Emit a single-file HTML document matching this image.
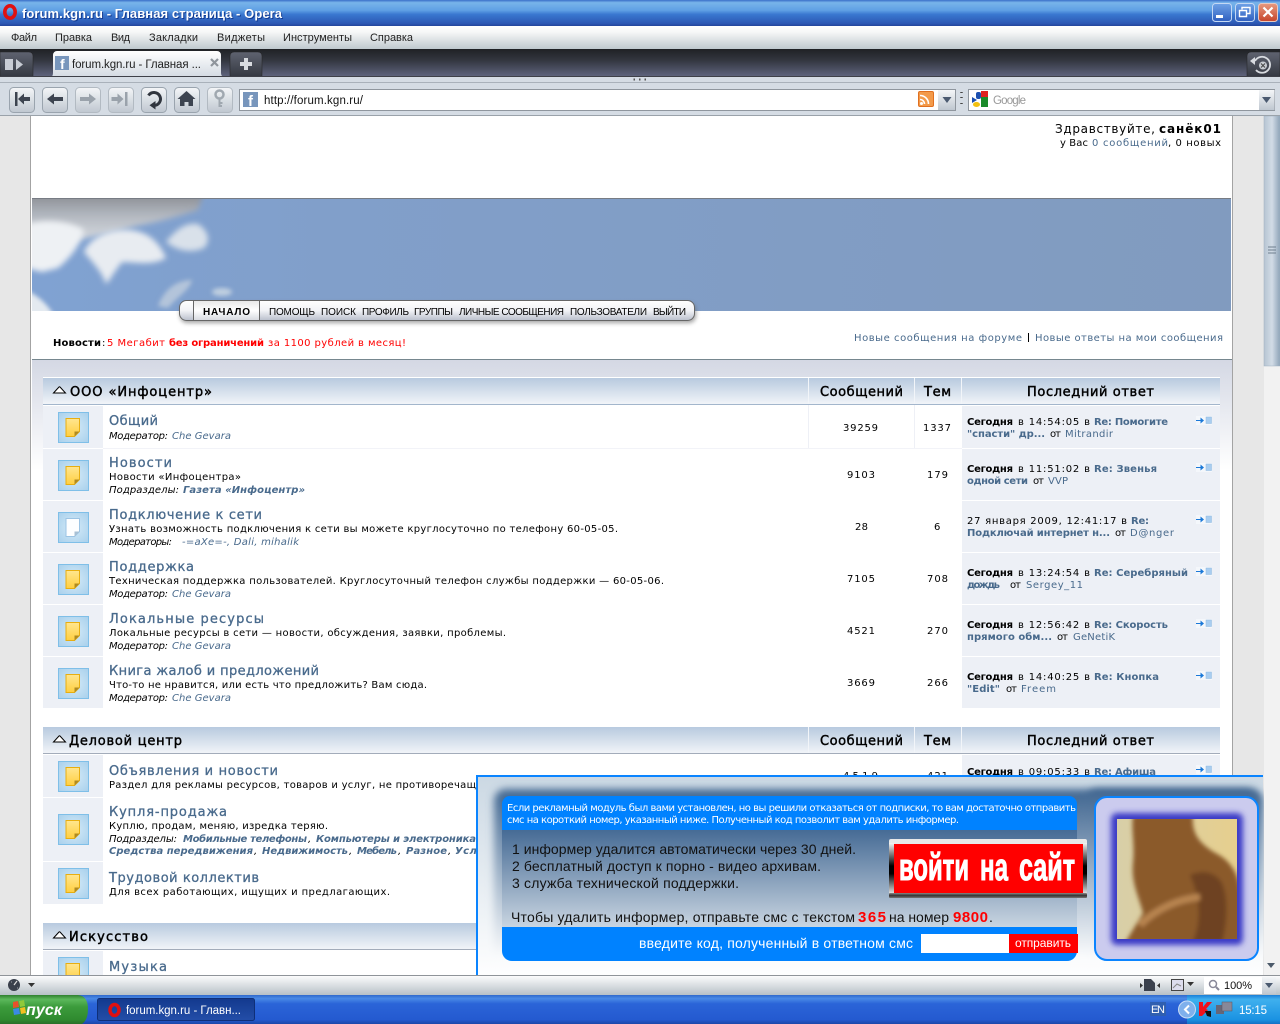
<!DOCTYPE html>
<html lang="ru"><head><meta charset="utf-8"><title>forum.kgn.ru - Главная страница - Opera</title>
<style>
html,body{margin:0;padding:0;width:1280px;height:1024px;overflow:hidden;background:#fff}
svg{display:block;position:absolute;left:0;top:0}
text{font:10px "DejaVu Sans","Noto Sans CJK SC",sans-serif;fill:#000;white-space:pre}
.l{fill:#496a8c}.b{font-weight:bold}.i{font-style:italic}
.ti{font-size:13px;fill:#496a8c;stroke:#496a8c;stroke-width:.3}
.h{font-size:13px;stroke:#000;stroke-width:.45}
.n{font-family:"Liberation Sans",sans-serif;font-size:10px}
.m{font-family:"Liberation Sans",sans-serif;font-size:11px;fill:#222}
.a{font-family:"Liberation Sans",sans-serif;font-size:14px;fill:#111}
.w{fill:#fff}.r{fill:#f00}
</style></head><body>
<svg width="1280" height="1024" viewBox="0 0 1280 1024" xmlns="http://www.w3.org/2000/svg">
<defs>
<linearGradient id="gT" x1="0" y1="0" x2="0" y2="1"><stop offset="0" stop-color="#3a6fc8"/><stop offset=".1" stop-color="#78b4ea"/><stop offset=".4" stop-color="#5f9fe4"/><stop offset=".55" stop-color="#3a78d0"/><stop offset=".9" stop-color="#2c58b4"/><stop offset="1" stop-color="#23459c"/></linearGradient>
<linearGradient id="gM" x1="0" y1="0" x2="0" y2="1"><stop offset="0" stop-color="#fff"/><stop offset=".25" stop-color="#f6f7f7"/><stop offset="1" stop-color="#bcc6cc"/></linearGradient>
<linearGradient id="gD" x1="0" y1="0" x2="0" y2="1"><stop offset="0" stop-color="#1f2125"/><stop offset=".4" stop-color="#33363f"/><stop offset="1" stop-color="#60657f"/></linearGradient>
<linearGradient id="gTb" x1="0" y1="0" x2="0" y2="1"><stop offset="0" stop-color="#5f6370"/><stop offset="1" stop-color="#343841"/></linearGradient>
<linearGradient id="gB" x1="0" y1="0" x2="0" y2="1"><stop offset="0" stop-color="#f4f6f8"/><stop offset="1" stop-color="#bfc7d0"/></linearGradient>
<linearGradient id="gTab" x1="0" y1="0" x2="0" y2="1"><stop offset="0" stop-color="#fff"/><stop offset="1" stop-color="#d3dae2"/></linearGradient>
<linearGradient id="gH" x1="0" y1="0" x2="0" y2="1"><stop offset="0" stop-color="#b8cadf"/><stop offset="1" stop-color="#f1f4f8"/></linearGradient>
<linearGradient id="gF" x1="0" y1="0" x2="0" y2="1"><stop offset="0" stop-color="#d4d8e4"/><stop offset="1" stop-color="#fff"/></linearGradient>
<linearGradient id="gN" x1="0" y1="0" x2="0" y2="1"><stop offset="0" stop-color="#fff"/><stop offset=".5" stop-color="#f2f3f6"/><stop offset="1" stop-color="#b9bfcc"/></linearGradient>
<linearGradient id="gN2" x1="0" y1="0" x2="0" y2="1"><stop offset="0" stop-color="#e8e8e8"/><stop offset=".5" stop-color="#fff"/><stop offset="1" stop-color="#d8dae0"/></linearGradient>
<linearGradient id="gAd" x1="0" y1="0" x2="0" y2="1"><stop offset="0" stop-color="#cbd8e3"/><stop offset="1" stop-color="#fff"/></linearGradient>
<linearGradient id="gAm" x1="0" y1="0" x2="0" y2="1"><stop offset="0" stop-color="#466b95"/><stop offset="1" stop-color="#c9d5e1"/></linearGradient>
<linearGradient id="gSh" x1="0" y1="0" x2="0" y2="1"><stop offset="0" stop-color="#3f6590"/><stop offset=".5" stop-color="#9fb3c8"/><stop offset="1" stop-color="#fff"/></linearGradient>
<linearGradient id="gSt" x1="0" y1="0" x2="0" y2="1"><stop offset="0" stop-color="#fff"/><stop offset="1" stop-color="#b7c0c7"/></linearGradient>
<linearGradient id="gTk" x1="0" y1="0" x2="0" y2="1"><stop offset="0" stop-color="#2f68cc"/><stop offset=".12" stop-color="#4a8ae6"/><stop offset=".3" stop-color="#2b64d8"/><stop offset=".85" stop-color="#245ad0"/><stop offset="1" stop-color="#1b47a8"/></linearGradient>
<linearGradient id="gTr" x1="0" y1="0" x2="0" y2="1"><stop offset="0" stop-color="#1a7fd8"/><stop offset=".15" stop-color="#3fb0ee"/><stop offset=".85" stop-color="#1a92e2"/><stop offset="1" stop-color="#1470c4"/></linearGradient>
<linearGradient id="gSr" x1="0" y1="0" x2="0" y2="1"><stop offset="0" stop-color="#2f7f2f"/><stop offset=".15" stop-color="#5cb85c"/><stop offset=".4" stop-color="#3c9c3c"/><stop offset=".85" stop-color="#2f8a2f"/><stop offset="1" stop-color="#2a6f2a"/></linearGradient>
<linearGradient id="gTs" x1="0" y1="0" x2="0" y2="1"><stop offset="0" stop-color="#13398e"/><stop offset="1" stop-color="#234ea8"/></linearGradient>
<linearGradient id="gSb" x1="0" y1="0" x2="1" y2="0"><stop offset="0" stop-color="#b6c4d2"/><stop offset=".5" stop-color="#d2dce6"/><stop offset="1" stop-color="#8ea3b8"/></linearGradient>
<linearGradient id="gWb" x1="0" y1="0" x2="0" y2="1"><stop offset="0" stop-color="#6fa2e6"/><stop offset="1" stop-color="#2f5fc0"/></linearGradient>
<linearGradient id="gCl" x1="0" y1="0" x2="0" y2="1"><stop offset="0" stop-color="#e89a80"/><stop offset="1" stop-color="#c6452a"/></linearGradient>
<linearGradient id="gDoc" x1="0" y1="0" x2="0" y2="1"><stop offset="0" stop-color="#ffe690"/><stop offset="1" stop-color="#ffcf40"/></linearGradient>
<linearGradient id="gSide" x1="0" y1="0" x2="0" y2="1"><stop offset="0" stop-color="#f4f4f4"/><stop offset=".45" stop-color="#000"/><stop offset=".6" stop-color="#000"/><stop offset="1" stop-color="#e8e8e8"/></linearGradient>
<linearGradient id="gBot" x1="0" y1="0" x2="0" y2="1"><stop offset="0" stop-color="#8a8a8a"/><stop offset=".5" stop-color="#333"/><stop offset="1" stop-color="#777"/></linearGradient>
<linearGradient id="gImg" x1="0" y1="0" x2="1" y2="0"><stop offset="0" stop-color="#d8cfa8"/><stop offset="1" stop-color="#e6cf8e"/></linearGradient>
<linearGradient id="gSky" x1="0" y1="0" x2="1" y2="0"><stop offset="0" stop-color="#80a2d2"/><stop offset=".25" stop-color="#819fca"/><stop offset="1" stop-color="#819bbf"/></linearGradient>
<linearGradient id="gCt" x1="0" y1="0" x2="0" y2="1"><stop offset="0" stop-color="#85888f"/><stop offset=".45" stop-color="#b4b9c1"/><stop offset="1" stop-color="#dde1e6"/></linearGradient>
<radialGradient id="gIc" cx=".5" cy=".5" r=".7"><stop offset="0" stop-color="#d6ebf8"/><stop offset="1" stop-color="#a8d0ec"/></radialGradient>
<filter id="bl1" x="-30%" y="-30%" width="160%" height="160%"><feGaussianBlur stdDeviation="1.5"/></filter>
<filter id="bl2" x="-30%" y="-30%" width="160%" height="160%"><feGaussianBlur stdDeviation="2"/></filter>
<filter id="bl3" x="-30%" y="-30%" width="160%" height="160%"><feGaussianBlur stdDeviation="3"/></filter>
<filter id="bl4" x="-30%" y="-30%" width="160%" height="160%"><feGaussianBlur stdDeviation="4"/></filter>
<clipPath id="cB"><rect x="32" y="198" width="1199" height="113"/></clipPath>
<clipPath id="cI"><rect x="1117" y="819" width="120" height="120"/></clipPath>
<g id="fi"><rect x="0.5" y="0.5" width="30" height="30" fill="url(#gIc)" stroke="#7fbfe8"/><path d="M8 6.5h13.5v13l-5 5H8z" fill="url(#gDoc)" stroke="#e8ae10"/><path d="M16.5 24.5v-5h5z" fill="#b08a20"/></g>
<g id="fw"><rect x="0.5" y="0.5" width="30" height="30" fill="url(#gIc)" stroke="#7fbfe8"/><path d="M8 6.5h13.5v13l-5 5H8z" fill="#fdfeff" stroke="#9cc4e4"/><path d="M16.5 24.5v-5h5z" fill="#a8c0d4"/></g>
<g id="ar"><rect x="0" y="0" width="16" height="9" fill="#f4f7fb"/><path d="M0 4h4.5v-2.5l3.500 3-3.500 3v-2.500H0z" fill="#1a78d8"/><rect x="10" y="1" width="5.500" height="6.500" fill="#a8cdf0" stroke="#8fb8de" stroke-width=".5"/></g>
<g id="tri"><path d="M.5 7 L6 1 Q6.500 .5 7 1 L12.500 7z" fill="#fff" stroke="#000"/></g>
</defs>

<!-- page -->
<rect width="1280" height="1024" fill="#e7e7e7"/>
<rect x="30" y="115" width="1203" height="865" fill="#a3a3a3"/>
<rect x="31" y="115" width="1201" height="865" fill="#fff"/>
<g id="banner" clip-path="url(#cB)">
<rect x="32" y="198" width="1199" height="113" fill="url(#gSky)"/>
<path d="M26 192H204L198 210C178 216 160 222 136 226 116 232 96 236 76 240L26 246z" fill="url(#gCt)" filter="url(#bl3)"/>
<path d="M26 224C48 218 72 222 84 230 80 246 70 258 58 268L42 272 26 268z" fill="#eef1f4" filter="url(#bl3)"/>
<path d="M84 252C90 238 108 228 130 230 150 232 160 244 166 258 152 266 136 262 122 262 114 272 110 280 106 284 102 272 94 264 84 252z" fill="#e8ecf1" filter="url(#bl3)"/>
<path d="M166 242C174 232 184 222 198 224 210 232 210 242 204 248 190 254 176 250 166 242z" fill="#d9e1ea" filter="url(#bl3)"/>
<path d="M158 306C164 290 176 280 192 280 190 290 178 296 168 308z" fill="#b3c4da" filter="url(#bl2)"/>
<ellipse cx="222" cy="292" rx="10" ry="4" fill="#bfcfe0" filter="url(#bl2)"/>
<path d="M26 290C38 296 48 304 54 316H26z" fill="#e4eaf0" filter="url(#bl2)"/>
<rect x="32" y="198" width="1199" height="1" fill="#777c84"/>
</g>
<text x="1055" y="133" style="font-size:12px" textLength="100">Здравствуйте,</text>
<text x="1159" y="133" class="b" style="font-size:12px" textLength="62">санёк01</text>
<text x="1060" y="146" textLength="28">у Вас</text>
<text x="1092" y="146" class="l" textLength="76">0 сообщений</text>
<text x="1168" y="146" textLength="53">, 0 новых</text>

<g id="nav">
<rect x="180" y="303" width="516" height="20" rx="7" fill="#666" filter="url(#bl2)" opacity=".6"/>
<rect x="179.500" y="300.500" width="515" height="20" rx="7" fill="url(#gN)" stroke="#666"/>
<rect x="193" y="301" width="67" height="19" fill="url(#gN2)"/>
<path d="M193.500 300.500v20M259.500 300.500v20" stroke="#666" fill="none"/>
<text x="203" y="315" class="n b" textLength="47">НАЧАЛО</text>
<text x="269" y="315" class="n" textLength="46">ПОМОЩЬ</text>
<text x="321" y="315" class="n" textLength="35">ПОИСК</text>
<text x="362" y="315" class="n" textLength="47">ПРОФИЛЬ</text>
<text x="414" y="315" class="n" textLength="39">ГРУППЫ</text>
<text x="459" y="315" class="n" textLength="105">ЛИЧНЫЕ СООБЩЕНИЯ</text>
<text x="570" y="315" class="n" textLength="77">ПОЛЬЗОВАТЕЛИ</text>
<text x="653" y="315" class="n" textLength="33">ВЫЙТИ</text>
</g>

<text x="53" y="346" class="b" textLength="48">Новости</text><text x="102" y="346">:</text>
<text x="107" y="346" class="r" textLength="58">5 Мегабит</text>
<text x="169" y="346" class="r b" textLength="95">без ограничений</text>
<text x="268" y="346" class="r" textLength="138">за 1100 рублей в месяц!</text>
<text x="854" y="341" class="l" textLength="168">Новые сообщения на форуме</text>
<rect x="1028" y="333" width="1" height="9" fill="#000"/>
<text x="1035" y="341" class="l" textLength="188">Новые ответы на мои сообщения</text>

<rect x="32" y="359" width="1200" height="1" fill="#76878f"/>
<rect x="32" y="360" width="1200" height="110" fill="url(#gF)"/>

<!-- category 1 -->
<g id="cat1">
<rect x="43" y="377" width="1177" height="332" fill="#fff"/>
<rect x="43" y="378" width="1177" height="26" fill="url(#gH)"/>
<rect x="43" y="404" width="1177" height="1" fill="#a3b6cc"/>
<path d="M808.500 378v26M914.500 378v26M961.500 378v26" stroke="#f2f5f9"/>
<use href="#tri" x="53" y="386"/>
<text x="70" y="396" class="h" textLength="142">ООО «Инфоцентр»</text>
<text x="820" y="396" class="h" textLength="83">Сообщений</text>
<text x="924" y="396" class="h" textLength="27">Тем</text>
<text x="1027" y="396" class="h" textLength="127">Последний ответ</text>
<path d="M808.500 405v43M914.500 405v43" stroke="#eef0f6"/>
<path d="M103 448.500H962" stroke="#f2f3f8"/>
<rect x="43" y="406" width="60" height="42" fill="#edf0f6"/><rect x="962" y="406" width="258" height="42" fill="#edf0f6"/>
<rect x="43" y="449" width="60" height="51" fill="#edf0f6"/><rect x="962" y="449" width="258" height="51" fill="#edf0f6"/>
<rect x="43" y="501" width="60" height="51" fill="#edf0f6"/><rect x="962" y="501" width="258" height="51" fill="#edf0f6"/>
<rect x="43" y="553" width="60" height="51" fill="#edf0f6"/><rect x="962" y="553" width="258" height="51" fill="#edf0f6"/>
<rect x="43" y="605" width="60" height="51" fill="#edf0f6"/><rect x="962" y="605" width="258" height="51" fill="#edf0f6"/>
<rect x="43" y="657" width="60" height="51" fill="#edf0f6"/><rect x="962" y="657" width="258" height="51" fill="#edf0f6"/>
<use href="#fi" x="58" y="412"/><use href="#fi" x="58" y="460"/><use href="#fw" x="58" y="512"/><use href="#fi" x="58" y="564"/><use href="#fi" x="58" y="616"/><use href="#fi" x="58" y="668"/>
<use href="#ar" x="1196" y="416"/><use href="#ar" x="1196" y="463"/><use href="#ar" x="1196" y="515"/><use href="#ar" x="1196" y="567"/><use href="#ar" x="1196" y="619"/><use href="#ar" x="1196" y="671"/>

<text x="109" y="425" class="ti" textLength="49">Общий</text>
<text x="109" y="439" class="i" textLength="59">Модератор:</text><text x="172" y="439" class="i l" textLength="59">Che Gevara</text>
<text x="843" y="431" textLength="35">39259</text><text x="923" y="431" textLength="28">1337</text>
<text x="967" y="425" class="b" textLength="46">Сегодня</text><text x="1018" y="425" textLength="72">в 14:54:05 в</text><text x="1094" y="425" class="b l" textLength="74">Re: Помогите</text>
<text x="967" y="437" class="b l" textLength="78">"спасти" др...</text><text x="1050" y="437" textLength="11">от</text><text x="1065" y="437" class="l" textLength="48">Mitrandir</text>

<text x="109" y="467" class="ti" textLength="63">Новости</text>
<text x="109" y="480" textLength="132">Новости «Инфоцентра»</text>
<text x="109" y="493" class="i" textLength="70">Подразделы:</text><text x="183" y="493" class="i b l" textLength="122">Газета «Инфоцентр»</text>
<text x="847" y="478" textLength="28">9103</text><text x="927" y="478" textLength="21">179</text>
<text x="967" y="472" class="b" textLength="46">Сегодня</text><text x="1018" y="472" textLength="72">в 11:51:02 в</text><text x="1094" y="472" class="b l" textLength="63">Re: Звенья</text>
<text x="967" y="484" class="b l" textLength="61">одной сети</text><text x="1033" y="484" textLength="11">от</text><text x="1048" y="484" class="l" textLength="20">VVP</text>

<text x="109" y="519" class="ti" textLength="153">Подключение к сети</text>
<text x="109" y="532" textLength="509">Узнать возможность подключения к сети вы можете круглосуточно по телефону 60-05-05.</text>
<text x="109" y="545" class="i" textLength="63">Модераторы:</text><text x="182" y="545" class="i l" textLength="117">-=aXe=-, Dali, mihalik</text>
<text x="855" y="530" textLength="13">28</text><text x="934" y="530" textLength="7">6</text>
<text x="967" y="524" textLength="160">27 января 2009, 12:41:17 в</text><text x="1131" y="524" class="b l" textLength="18">Re:</text>
<text x="967" y="536" class="b l" textLength="143">Подключай интернет н...</text><text x="1115" y="536" textLength="11">от</text><text x="1130" y="536" class="l" textLength="44">D@nger</text>

<text x="109" y="571" class="ti" textLength="85">Поддержка</text>
<text x="109" y="584" textLength="555">Техническая поддержка пользователей. Круглосуточный телефон службы поддержки — 60-05-06.</text>
<text x="109" y="597" class="i" textLength="59">Модератор:</text><text x="172" y="597" class="i l" textLength="59">Che Gevara</text>
<text x="847" y="582" textLength="28">7105</text><text x="927" y="582" textLength="21">708</text>
<text x="967" y="576" class="b" textLength="46">Сегодня</text><text x="1018" y="576" textLength="72">в 13:24:54 в</text><text x="1094" y="576" class="b l" textLength="94">Re: Серебряный</text>
<text x="967" y="588" class="b l" textLength="33">дождь</text><text x="1010" y="588" textLength="11">от</text><text x="1026" y="588" class="l" textLength="57">Sergey_11</text>

<text x="109" y="623" class="ti" textLength="155">Локальные ресурсы</text>
<text x="109" y="636" textLength="397">Локальные ресурсы в сети — новости, обсуждения, заявки, проблемы.</text>
<text x="109" y="649" class="i" textLength="59">Модератор:</text><text x="172" y="649" class="i l" textLength="59">Che Gevara</text>
<text x="847" y="634" textLength="28">4521</text><text x="927" y="634" textLength="21">270</text>
<text x="967" y="628" class="b" textLength="46">Сегодня</text><text x="1018" y="628" textLength="72">в 12:56:42 в</text><text x="1094" y="628" class="b l" textLength="74">Re: Скорость</text>
<text x="967" y="640" class="b l" textLength="85">прямого обм...</text><text x="1057" y="640" textLength="11">от</text><text x="1073" y="640" class="l" textLength="42">GeNetiK</text>

<text x="109" y="675" class="ti" textLength="210">Книга жалоб и предложений</text>
<text x="109" y="688" textLength="318">Что-то не нравится, или есть что предложить? Вам сюда.</text>
<text x="109" y="701" class="i" textLength="59">Модератор:</text><text x="172" y="701" class="i l" textLength="59">Che Gevara</text>
<text x="847" y="686" textLength="28">3669</text><text x="927" y="686" textLength="21">266</text>
<text x="967" y="680" class="b" textLength="46">Сегодня</text><text x="1018" y="680" textLength="72">в 14:40:25 в</text><text x="1094" y="680" class="b l" textLength="65">Re: Кнопка</text>
<text x="967" y="692" class="b l" textLength="33">"Edit"</text><text x="1006" y="692" textLength="11">от</text><text x="1021" y="692" class="l" textLength="35">Freem</text>
</g>

<!-- category 2 -->
<g id="cat2">
<rect x="43" y="727" width="1177" height="26" fill="url(#gH)"/>
<rect x="43" y="753" width="1177" height="1" fill="#a3acba"/>
<path d="M808.500 727v26M914.500 727v26M961.500 727v26" stroke="#f2f5f9"/>
<use href="#tri" x="53" y="735"/>
<text x="69" y="745" class="h" textLength="113">Деловой центр</text>
<text x="820" y="745" class="h" textLength="83">Сообщений</text>
<text x="924" y="745" class="h" textLength="27">Тем</text>
<text x="1027" y="745" class="h" textLength="127">Последний ответ</text>
<rect x="43" y="755" width="60" height="42" fill="#edf0f6"/>
<rect x="962" y="755" width="258" height="42" fill="#edf0f6"/>
<rect x="43" y="798" width="60" height="63" fill="#edf0f6"/>
<rect x="43" y="862" width="60" height="42" fill="#edf0f6"/>
<use href="#fi" x="58" y="761"/><use href="#fi" x="58" y="814"/><use href="#fi" x="58" y="868"/>
<use href="#ar" x="1196" y="765"/>
<text x="109" y="775" class="ti" textLength="169">Объявления и новости</text>
<text x="109" y="788" textLength="367">Раздел для рекламы ресурсов, товаров и услуг, не противоречащ</text>
<text x="843" y="779" textLength="35">4519</text><text x="927" y="779" textLength="21">421</text>
<text x="967" y="775" class="b" textLength="46">Сегодня</text><text x="1018" y="775" textLength="72">в 09:05:33 в</text><text x="1094" y="775" class="b l" textLength="62">Re: Афиша</text>
<text x="109" y="816" class="ti" textLength="118">Купля-продажа</text>
<text x="109" y="829" textLength="219">Куплю, продам, меняю, изредка теряю.</text>
<text x="109" y="842" class="i" textLength="68">Подразделы:</text>
<text x="183" y="842" class="i b l" textLength="124">Мобильные телефоны</text><text x="308" y="842" class="i">,</text>
<text x="316" y="842" class="i b l" textLength="160">Компьютеры и электроника</text>
<text x="109" y="854" class="i b l" textLength="144">Средства передвижения</text><text x="254" y="854" class="i">,</text>
<text x="262" y="854" class="i b l" textLength="86">Недвижимость</text><text x="349" y="854" class="i">,</text>
<text x="357" y="854" class="i b l" textLength="40">Мебель</text><text x="398" y="854" class="i">,</text>
<text x="406" y="854" class="i b l" textLength="41">Разное</text><text x="448" y="854" class="i">,</text>
<text x="455" y="854" class="i b l" textLength="42">Услуги</text>
<text x="109" y="882" class="ti" textLength="150">Трудовой коллектив</text>
<text x="109" y="895" textLength="281">Для всех работающих, ищущих и предлагающих.</text>
</g>

<!-- category 3 -->
<g id="cat3">
<rect x="43" y="923" width="1177" height="26" fill="url(#gH)"/>
<rect x="43" y="949" width="1177" height="1" fill="#a3acba"/>
<use href="#tri" x="53" y="931"/>
<text x="69" y="941" class="h" textLength="79">Искусство</text>
<rect x="43" y="951" width="60" height="30" fill="#edf0f6"/>
<use href="#fi" x="58" y="957"/>
<text x="109" y="971" class="ti" textLength="58">Музыка</text>
</g>

<!-- ad informer -->
<g id="informer">
<rect x="476" y="775" width="787" height="205" fill="url(#gAd)"/>
<rect x="476" y="775" width="787" height="2" fill="#0a84ff"/>
<rect x="476" y="775" width="2" height="205" fill="#0a84ff"/>
<rect x="494" y="789" width="764" height="172" rx="12" fill="url(#gSh)" filter="url(#bl4)"/>
<rect x="1086" y="789" width="177" height="172" rx="12" fill="url(#gSh)" filter="url(#bl4)"/>
<path d="M502 830v-26a8 8 0 0 1 8-8h559a8 8 0 0 1 8 8v26z" fill="#0082ff"/>
<rect x="502" y="830" width="575" height="97" fill="url(#gAm)"/>
<path d="M502 927h575v24a10 10 0 0 1-10 10H512a10 10 0 0 1-10-10z" fill="#0082ff"/>
<text x="507" y="811" class="w" textLength="569">Если рекламный модуль был вами установлен, но вы решили отказаться от подписки, то вам достаточно отправить</text>
<text x="507" y="823" class="w" textLength="452">смс на короткий номер, указанный ниже. Полученный код позволит вам удалить информер.</text>
<text x="512" y="854" class="a" textLength="344">1 информер удалится автоматически через 30 дней.</text>
<text x="512" y="871" class="a" textLength="309">2 бесплатный доступ к порно - видео архивам.</text>
<text x="512" y="888" class="a" textLength="227">3 служба технической поддержки.</text>
<text x="511" y="922" class="a" textLength="344">Чтобы удалить информер, отправьте смс с текстом</text>
<text x="858" y="922" class="a b" style="fill:#f00;font-size:15px" textLength="28">365</text>
<text x="889" y="922" class="a" textLength="60">на номер</text>
<text x="953" y="922" class="a b" style="fill:#f00;font-size:15px" textLength="35">9800</text>
<text x="989" y="922" class="a">.</text>
<rect x="889" y="839" width="198" height="59" rx="2" fill="#e8e8e8"/>
<rect x="889" y="843" width="5" height="51" fill="url(#gSide)"/>
<rect x="1083" y="843" width="4" height="51" fill="url(#gSide)"/>
<rect x="889" y="893" width="198" height="5" rx="1" fill="url(#gBot)"/>
<rect x="894" y="844" width="189" height="49" fill="#f00"/>
<text x="899" y="880" lengthAdjust="spacingAndGlyphs" textLength="70" style="font:bold 38px 'Liberation Sans',sans-serif;fill:#fff;stroke:#fff;stroke-width:1">войти</text>
<text x="980" y="880" lengthAdjust="spacingAndGlyphs" textLength="28" style="font:bold 38px 'Liberation Sans',sans-serif;fill:#fff;stroke:#fff;stroke-width:1">на</text>
<text x="1019" y="880" lengthAdjust="spacingAndGlyphs" textLength="56" style="font:bold 38px 'Liberation Sans',sans-serif;fill:#fff;stroke:#fff;stroke-width:1">сайт</text>
<text x="639" y="948" class="a w" style="fill:#fff" textLength="274">введите код, полученный в ответном смс</text>
<rect x="921" y="934" width="88" height="19" fill="#fff"/>
<rect x="1009" y="934" width="69" height="19" fill="#f00"/>
<text x="1015" y="947" class="n" style="fill:#fff;font-size:12px" textLength="56">отправить</text>
<rect x="1095" y="797" width="163" height="163" rx="12" fill="#cbcbee" stroke="#0a84ff" stroke-width="2"/>
<rect x="1111" y="813" width="132" height="132" rx="6" fill="#3a3ac6" filter="url(#bl3)"/>
<g clip-path="url(#cI)">
<rect x="1117" y="819" width="120" height="120" fill="url(#gImg)"/>
<g filter="url(#bl2)">
<path d="M1133 815h60c-2 20 8 30 26 40 14 8 22 24 22 44v44h-116l18-30c-4-16-12-30-10-50 2-20-2-32 0-48z" fill="#8b5a2b"/>
<path d="M1190 875c14-6 26-2 32 8 6 14 6 36 0 60h-30c10-20 8-46-2-68z" fill="#6e4320"/>
<path d="M1140 925c16-16 38-26 60-28" stroke="#b88450" stroke-width="7" fill="none"/>
</g>
</g>
</g>

<!-- right gutter + scrollbar -->
<g id="scroll">
<rect x="1264" y="115" width="16" height="860" fill="#f2f2f2"/>
<rect x="1264" y="116" width="16" height="250" fill="url(#gSb)" stroke="#9fb0c0" stroke-width=".5"/>
<path d="M1268 247h8M1268 250h8M1268 253h8" stroke="#6f7f8f"/>
<path d="M1267 963h8l-4 5z" fill="#4c5a6a"/>
</g>

<!-- browser chrome top -->
<g id="titlebar">
<rect x="0" y="0" width="1280" height="26" fill="url(#gT)"/>
<ellipse cx="10" cy="12" rx="5.200" ry="6.200" fill="none" stroke="#e01010" stroke-width="3.600"/>
<text x="22" y="18" style="font:bold 13px 'Liberation Sans',sans-serif;fill:#fff;filter:drop-shadow(1px 1px 0 #123a90)" textLength="260">forum.kgn.ru - Главная страница - Opera</text>
<rect x="1212.500" y="3.500" width="19" height="18" rx="3" fill="url(#gWb)" stroke="#c4d8f4"/>
<rect x="1216" y="15" width="7" height="3" fill="#fff"/>
<rect x="1235.500" y="3.500" width="19" height="18" rx="3" fill="url(#gWb)" stroke="#c4d8f4"/>
<path d="M1242 9.500v-2h8v6h-3M1239.500 10.500h7v6h-7z" fill="none" stroke="#fff" stroke-width="1.400"/>
<rect x="1258.500" y="3.500" width="19" height="18" rx="3" fill="url(#gCl)" stroke="#e8c8c0"/>
<path d="M1263.500 7.500l9 9M1272.500 7.500l-9 9" stroke="#fff" stroke-width="2.200"/>
</g>
<rect x="0" y="26" width="1280" height="24" fill="url(#gM)"/>
<text x="11" y="41" class="m" textLength="26">Файл</text>
<text x="55" y="41" class="m" textLength="37">Правка</text>
<text x="111" y="41" class="m" textLength="19">Вид</text>
<text x="149" y="41" class="m" textLength="49">Закладки</text>
<text x="217" y="41" class="m" textLength="48">Виджеты</text>
<text x="283" y="41" class="m" textLength="69">Инструменты</text>
<text x="370" y="41" class="m" textLength="43">Справка</text>

<g id="tabs">
<rect x="0" y="49" width="1280" height="28" fill="url(#gD)"/>
<path d="M0 52h29a4 4 0 0 1 4 4v21H0z" fill="url(#gTb)" stroke="#222" stroke-width=".5"/>
<rect x="5" y="59" width="8" height="11" fill="#c8ccd4"/><path d="M16 59v11l7-5.500z" fill="#c8ccd4"/>
<path d="M50 77c3 0 3-3 3-5V55a4 4 0 0 1 4-4h160a4 4 0 0 1 4 4v17c0 2 0 5 4 5z" fill="url(#gTab)"/>
<rect x="55" y="56" width="14" height="14" fill="#7896bc"/>
<text x="60" y="69" style="font:bold 14px 'Liberation Sans',sans-serif;fill:#fff">f</text>
<text x="72" y="68" style="font:11.500px 'Liberation Sans',sans-serif;fill:#222" textLength="129">forum.kgn.ru - Главная ...</text>
<path d="M211 59l7 7M218 59l-7 7" stroke="#8f959c" stroke-width="2.200"/>
<path d="M230 77V56a4 4 0 0 1 4-4h24a4 4 0 0 1 4 4v21z" fill="url(#gTb)" stroke="#222" stroke-width=".5"/>
<path d="M246 58v12M240 64h12" stroke="#d8dbe0" stroke-width="4"/>
<path d="M1247 77V56a4 4 0 0 1 4-4h29v25z" fill="url(#gTb)" stroke="#222" stroke-width=".5"/>
<path d="M1255 61a8 8 0 1 1 1 9" fill="none" stroke="#d8dbe0" stroke-width="1.800"/>
<path d="M1253 56v8l-5-4z" fill="#d8dbe0" transform="translate(2 1)"/>
<circle cx="1263" cy="65.500" r="4" fill="#c8ccd2"/><path d="M1261 63.500l4 4M1265 63.500l-4 4" stroke="#444" stroke-width="1"/>
</g>
<rect x="0" y="76" width="1280" height="1" fill="#3e4048"/>
<rect x="0" y="77" width="1280" height="38" fill="#d5dce4"/>
<rect x="0" y="82" width="1280" height="1" fill="#a9b1ba"/>
<rect x="0" y="115" width="1280" height="1" fill="#9aa2aa"/>
<path d="M633.500 79.500h1.500M639 79.500h1.500M644.500 79.500h1.500" stroke="#555" stroke-width="2"/>

<g id="toolbar">
<rect x="9.500" y="87.500" width="25" height="25" rx="4" fill="url(#gB)" stroke="#9aa4ae"/>
<rect x="42.500" y="87.500" width="25" height="25" rx="4" fill="url(#gB)" stroke="#9aa4ae"/>
<rect x="75.500" y="87.500" width="25" height="25" rx="4" fill="url(#gB)" stroke="#b2bac2"/>
<rect x="108.500" y="87.500" width="25" height="25" rx="4" fill="url(#gB)" stroke="#b2bac2"/>
<rect x="141.500" y="87.500" width="25" height="25" rx="4" fill="url(#gB)" stroke="#9aa4ae"/>
<rect x="174.500" y="87.500" width="25" height="25" rx="4" fill="url(#gB)" stroke="#9aa4ae"/>
<rect x="207.500" y="87.500" width="25" height="25" rx="4" fill="url(#gB)" stroke="#b2bac2"/>
<rect x="15" y="92" width="2.500" height="14" fill="#3d4450"/><path d="M18 99l6-5.500v3.500h6v4h-6v3.500z" fill="#3d4450"/>
<path d="M47 99l7-5.500v3.500h9v4h-9v3.500z" fill="#3d4450"/>
<path d="M96 99l-7-5.500v3.500h-9v4h9v3.500z" fill="#9aa2ab"/>
<rect x="125" y="92" width="2.500" height="14" fill="#9aa2ab"/><path d="M123.500 99l-6-5.500v3.500h-6v4h6v3.500z" fill="#9aa2ab"/>
<path d="M148.500 95.500A6.500 6.500 0 1 1 154 105.500" fill="none" stroke="#30353e" stroke-width="3"/><path d="M155.500 101v8.500l-6-4.200z" fill="#30353e"/>
<path d="M186.500 91l9 8h-2.500v7h-4.500v-4h-4v4H180v-7h-2.500z" fill="#3d4450"/>
<circle cx="219.500" cy="94.500" r="4" fill="none" stroke="#a0a8b0" stroke-width="2.500"/><path d="M219.500 98v9M219.500 103h3M219.500 106h2.500" stroke="#a0a8b0" stroke-width="2"/>
<rect x="239.500" y="89.500" width="716" height="21" fill="#fff" stroke="#8f969e"/>
<rect x="243" y="92" width="15" height="15" fill="#7896bc"/>
<text x="248" y="106" style="font:bold 15px 'Liberation Sans',sans-serif;fill:#fff">f</text>
<text x="264" y="104" style="font:11.500px 'Liberation Sans',sans-serif;fill:#111" textLength="99">http://forum.kgn.ru/</text>
<rect x="918.500" y="91.500" width="15" height="15" rx="1.500" fill="#f39a4a" stroke="#e07020"/>
<circle cx="921.500" cy="103.500" r="1.500" fill="#fff"/><path d="M920 99.500a4.500 4.500 0 0 1 4.500 4.500M920 95.500a8.500 8.500 0 0 1 8.500 8.500" fill="none" stroke="#fff" stroke-width="1.600"/>
<rect x="938" y="90" width="17" height="20" fill="url(#gB)"/>
<path d="M942.500 97h9l-4.500 6z" fill="#4b5a70"/>
<path d="M961.500 92v1M961.500 97v1M961.500 103v1" stroke="#444" stroke-width="2.500"/>
<rect x="968.500" y="89.500" width="306" height="21" fill="#fff" stroke="#8f969e"/>
<rect x="976" y="92" width="5" height="7" rx="2" fill="#1c4fb0"/><rect x="981" y="91" width="7" height="7" fill="#e02020"/>
<path d="M972 97l5 3-5 3z" fill="#1c4fb0"/><rect x="981" y="97" width="7" height="10" fill="#1a8a2a"/><ellipse cx="976.500" cy="104.500" rx="3.500" ry="2.500" fill="#f2c010"/>
<text x="993" y="104" style="font:11.500px 'Liberation Sans',sans-serif;fill:#999" textLength="33">Google</text>
<rect x="1259" y="90" width="15.500" height="20" fill="url(#gB)"/>
<path d="M1262 97h9l-4.500 6z" fill="#4b5a70"/>
</g>

<!-- status bar -->
<g id="status">
<rect x="0" y="975" width="1280" height="20" fill="url(#gSt)"/>
<rect x="0" y="975" width="1280" height="1" fill="#8f9499"/>
<circle cx="14" cy="985" r="6" fill="#3a404c"/><path d="M14 985l3-4M11 982h.5M17 988h.5" stroke="#ddd" stroke-width="1.200"/>
<path d="M28 983h7l-3.500 4z" fill="#333"/>
<path d="M1140 983l3 2.500-3 2.500zM1160 983l-3 2.500 3 2.500z" fill="#333"/><path d="M1144 979h7l4 4v8h-11z" fill="#3a404c"/>
<rect x="1171.500" y="979.500" width="12" height="11" fill="#dde" stroke="#444"/><path d="M1173 988l4-4 4 2" stroke="#888" fill="none"/>
<path d="M1187 982h7l-3.500 4z" fill="#333"/>
<rect x="1204" y="977" width="58" height="17" fill="#fff"/><rect x="1262" y="977" width="14" height="17" fill="url(#gB)"/>
<circle cx="1213" cy="984" r="3.500" fill="none" stroke="#889" stroke-width="1.500"/><path d="M1216 987l3 3" stroke="#889" stroke-width="2"/>
<text x="1224" y="989" style="font:11px 'Liberation Sans',sans-serif;fill:#111" textLength="28">100%</text>
<path d="M1265 983h8l-4 5z" fill="#4b5a70"/>
</g>

<!-- taskbar -->
<g id="taskbar">
<rect x="0" y="995" width="1280" height="29" fill="url(#gTk)"/>
<path d="M0 995h78q10 1 10 14 0 11-6 15H0z" fill="url(#gSr)"/>
<path d="M13 1002l5-1 1 6-6 1z" fill="#e8502a"/><path d="M19 1001l5-1 1 6-5 1z" fill="#8fc93a"/><path d="M13 1009l6-1 1 6-6 1z" fill="#3a8ae6"/><path d="M20 1008l5-1 1 6-5 1z" fill="#f2c020"/>
<text x="26" y="1015" style="font:italic bold 16px 'Liberation Sans',sans-serif;fill:#fff" textLength="36">пуск</text>
<rect x="97.500" y="998.500" width="157" height="22" rx="2" fill="url(#gTs)" stroke="#0f2f78"/>
<ellipse cx="114.500" cy="1010" rx="4.500" ry="5.500" fill="none" stroke="#e01010" stroke-width="3.500"/>
<text x="126" y="1014" style="font:11.500px 'Liberation Sans',sans-serif;fill:#fff" textLength="115">forum.kgn.ru - Главн...</text>
<rect x="1150" y="1002" width="16" height="14" fill="#2f5fb0"/>
<text x="1151" y="1013" style="font:11px 'Liberation Sans',sans-serif;fill:#fff" textLength="14">EN</text>
<rect x="1187" y="995" width="93" height="29" fill="url(#gTr)"/>
<circle cx="1187" cy="1009.500" r="8.500" fill="#7fb0ec" stroke="#c8dcf6"/>
<path d="M1189 1005.500l-4 4 4 4" fill="none" stroke="#fff" stroke-width="2"/>
<path d="M1199 1002h4v5l4-5h5l-6 7 2 1-6 6h-3z" fill="#f0101c"/><path d="M1205 1011l6 0 0 6-4-1z" fill="#111"/>
<rect x="1216" y="1005" width="8" height="9" fill="#667"/><rect x="1222" y="1002" width="10" height="9" fill="#889" stroke="#556" stroke-width=".5"/>
<text x="1239" y="1014" style="font:11.500px 'Liberation Sans',sans-serif;fill:#fff" textLength="28">15:15</text>
</g>
</svg>
</body></html>
